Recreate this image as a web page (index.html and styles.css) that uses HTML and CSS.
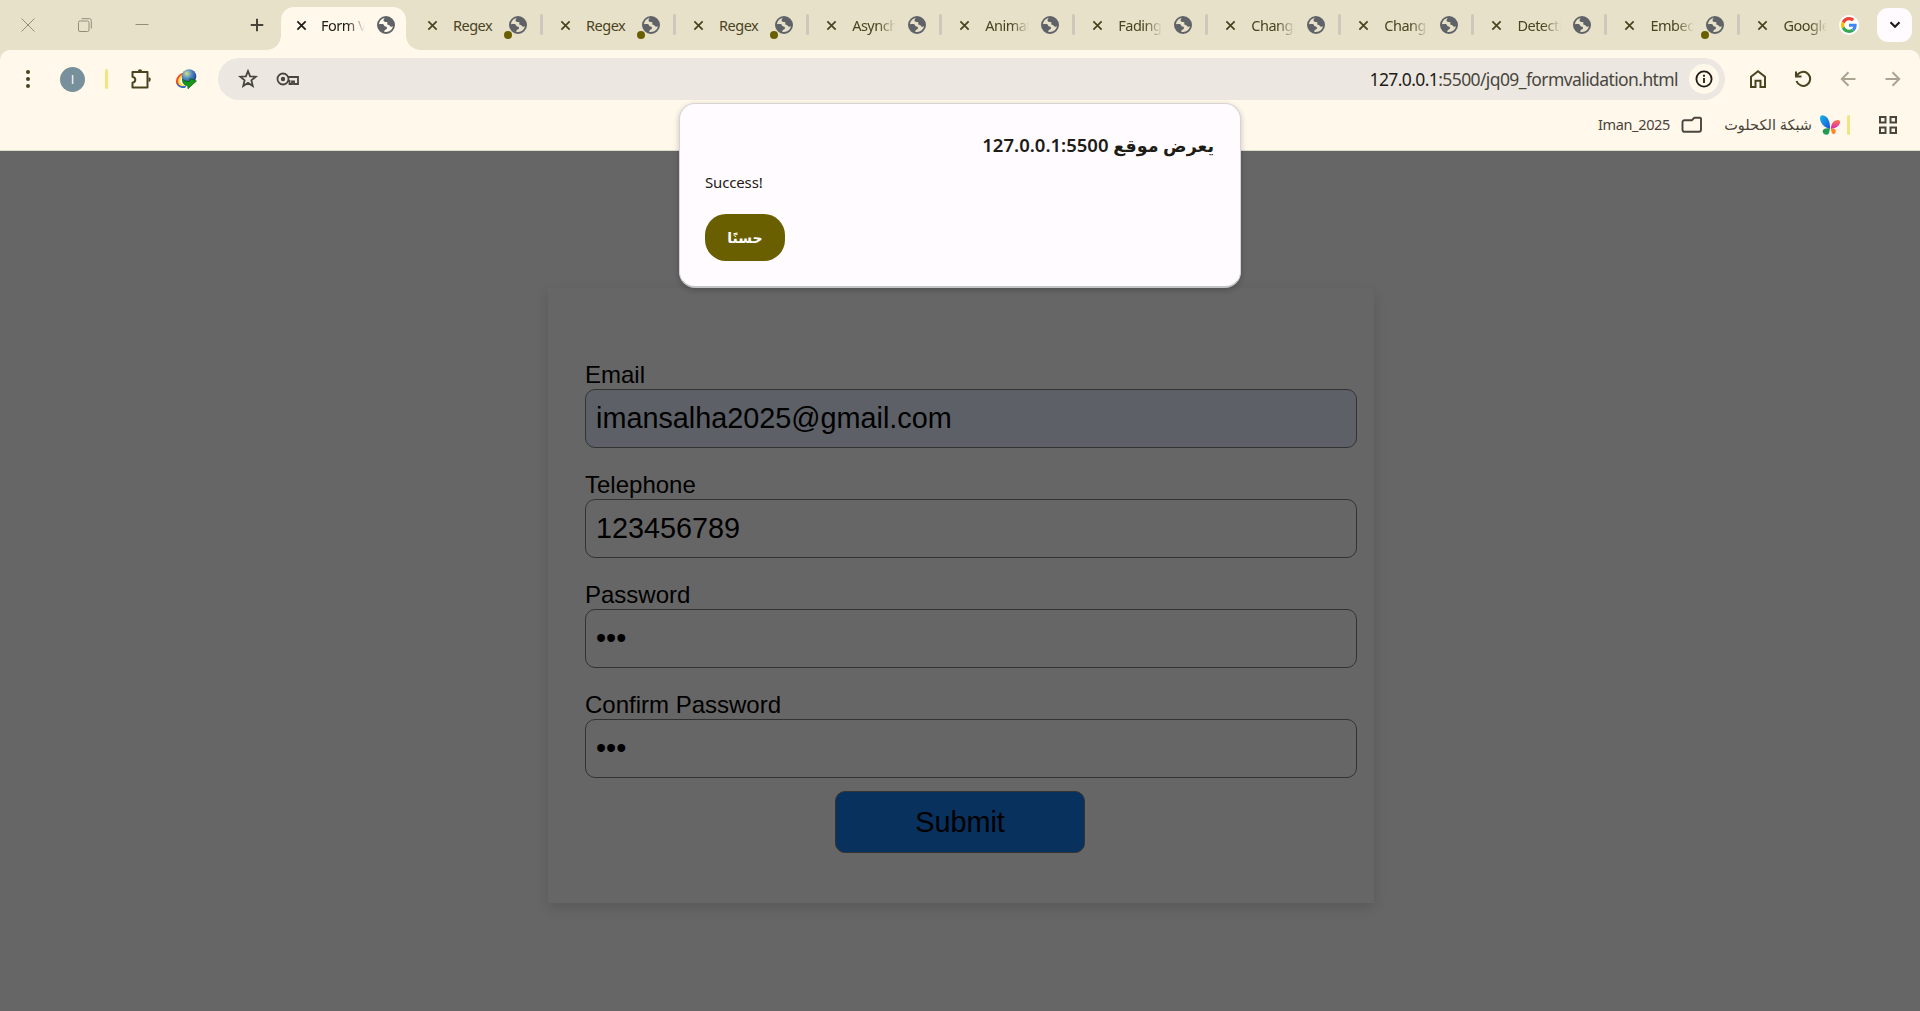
FILE: index.html
```html
<!DOCTYPE html>
<html lang="ar">
<head>
<meta charset="utf-8">
<title>Form Validation</title>
<link rel="stylesheet" href="styles.css">
</head>
<body>
<svg class="defs" aria-hidden="true">
  <symbol id="x" viewBox="0 0 12 12"><path d="M1.500 1.500l9 9M10.500 1.500l-9 9" fill="none" stroke="currentColor" stroke-width="1.9"/></symbol>
  <symbol id="globe" viewBox="0 0 18 18"><path fill="currentColor" fill-rule="evenodd" d="M9 0a9 9 0 1 0 0 18A9 9 0 0 0 9 0zM2 8.300C2.300 5 4.700 2.500 7.800 2.100 6.800 3 6.300 4 6.700 5c.4.900 1.500.9 2.600.9 1.200.1 1.400.8 1 1.600-.4.700-.1 1.100.7 1.200 1.300.2 1.500.8 2.200 1.500.8.800 1.900.6 2.700.1C15.400 13.500 12.600 16 9 16c-.7 0-1.200-.1-1.800-.2.200-1.200.6-2.100 1.700-2.400 1.200-.3 1.300-1.300.9-2.100-.4-.7-1.400-.7-2.100-1-.7-.4-.5-1.200-1.100-1.700C5.600 7.800 3.500 8.100 2 8.300z"/></symbol>
</svg>

<header class="tabstrip">
  <div class="window-controls">
    <svg width="14" height="14" viewBox="0 0 14 14"><path d="M.5.5l13 13M13.500.5l-13 13"/></svg>
    <svg width="14" height="14" viewBox="0 0 14 14"><rect x=".5" y="3" width="10.500" height="10.500" rx="1.500"/><path d="M3.500.7h8a1.800 1.800 0 0 1 1.800 1.800v8"/></svg>
    <svg width="14" height="14" viewBox="0 0 14 14"><path d="M.5 6.500h13"/></svg>
  </div>
  <svg class="new-tab" width="14" height="14" viewBox="0 0 14 14"><path d="M7 .7v12.600M.7 7h12.600"/></svg>
  <div class="tab active"><svg class="close"><use href="#x"/></svg><span>Form V</span><i class="favicon"><svg><use href="#globe"/></svg></i></div>
  <div class="tabs">
    <div class="tab marked"><svg class="close"><use href="#x"/></svg><span class="whole">Regex</span><i class="favicon"><svg><use href="#globe"/></svg></i></div>
    <div class="tab marked"><svg class="close"><use href="#x"/></svg><span class="whole">Regex</span><i class="favicon"><svg><use href="#globe"/></svg></i></div>
    <div class="tab marked"><svg class="close"><use href="#x"/></svg><span class="whole">Regex</span><i class="favicon"><svg><use href="#globe"/></svg></i></div>
    <div class="tab"><svg class="close"><use href="#x"/></svg><span>Asynch</span><i class="favicon"><svg><use href="#globe"/></svg></i></div>
    <div class="tab"><svg class="close"><use href="#x"/></svg><span>Animat</span><i class="favicon"><svg><use href="#globe"/></svg></i></div>
    <div class="tab"><svg class="close"><use href="#x"/></svg><span>Fading</span><i class="favicon"><svg><use href="#globe"/></svg></i></div>
    <div class="tab"><svg class="close"><use href="#x"/></svg><span>Changi</span><i class="favicon"><svg><use href="#globe"/></svg></i></div>
    <div class="tab"><svg class="close"><use href="#x"/></svg><span>Changi</span><i class="favicon"><svg><use href="#globe"/></svg></i></div>
    <div class="tab"><svg class="close"><use href="#x"/></svg><span>Detecti</span><i class="favicon"><svg><use href="#globe"/></svg></i></div>
    <div class="tab marked"><svg class="close"><use href="#x"/></svg><span>Embed</span><i class="favicon"><svg><use href="#globe"/></svg></i></div>
    <div class="tab last"><svg class="close"><use href="#x"/></svg><span>Google</span><i class="favicon google"><svg viewBox="0 0 48 48"><path fill="#ea4335" d="M24 9.500c3.540 0 6.710 1.220 9.210 3.600l6.850-6.850C35.900 2.380 30.470 0 24 0 14.620 0 6.510 5.380 2.560 13.220l7.980 6.190C12.430 13.720 17.740 9.500 24 9.500z"/><path fill="#4285f4" d="M46.980 24.550c0-1.570-.15-3.090-.38-4.550H24v9.020h12.940c-.58 2.960-2.260 5.480-4.780 7.180l7.730 6c4.510-4.180 7.090-10.360 7.090-17.650z"/><path fill="#fbbc05" d="M10.530 28.590A14.500 14.500 0 0 1 9.770 24c0-1.600.27-3.140.76-4.590l-7.980-6.190A23.900 23.900 0 0 0 0 24c0 3.880.92 7.540 2.560 10.780l7.970-6.190z"/><path fill="#34a853" d="M24 48c6.480 0 11.930-2.130 15.890-5.810l-7.730-6c-2.150 1.450-4.920 2.300-8.160 2.300-6.260 0-11.570-4.220-13.470-9.910l-7.980 6.190C6.510 42.620 14.620 48 24 48z"/></svg></i></div>
  </div>
  <button class="tab-search"><svg width="12" height="8" viewBox="0 0 12 8"><path d="M1.500 1.300L6 5.800l4.500-4.500"/></svg></button>
</header>

<nav class="chrome">
  <div class="toolbar">
    <svg class="icon" width="6" height="20" viewBox="0 0 6 20"><g fill="#49441f"><circle cx="3" cy="3" r="2"/><circle cx="3" cy="10" r="2"/><circle cx="3" cy="17" r="2"/></g></svg>
    <b class="avatar">I</b>
    <i class="bar"></i>
    <svg class="icon line" width="22" height="22" viewBox="0 0 22 22"><path d="M2.500 4h15v15.500h-15v-4.700c3.700-.8 3.700-5.200 0-6z" stroke-linejoin="round"/><path d="M7.800 3.500a2.200 2.200 0 0 1 4.400 0zM18.500 9.300a2.300 2.300 0 0 1 0 4.600z" fill="#49441f" stroke="none"/></svg>
    <svg class="icon" width="22" height="20" viewBox="0 0 22 20"><defs><radialGradient id="ball" cx=".35" cy=".3" r=".8"><stop offset="0" stop-color="#d5e27a"/><stop offset=".4" stop-color="#5590c8"/><stop offset="1" stop-color="#122b83"/></radialGradient></defs><path d="M9 3.500C4 4.500 .800 8.500 1 13c.3 4 4 5.500 8 5.500z" fill="#ee4f2b"/><path d="M9 5C5.500 6 2.800 9 3.200 13c.5 3.500 3 4.500 6 4.500z" fill="#ffe04a"/><path d="M9 7c-2.500 1-4 3.500-3.600 6 .5 2 2 3 4 3z" fill="#fff"/><path d="M1.300 13c2 4 6 5 10 3.500l-1 2.200c-4 1-8-.7-9-5.700z" fill="#2b6cc9"/><circle cx="14" cy="7.500" r="7.300" fill="url(#ball)"/><path d="M7.500 10c2 2.500 4.500 2.800 7 2.300l.5-2.800 6.500 2.500-8.500 7.800-.3-3C9 16.500 7 13.500 7.500 10z" fill="#159818" stroke="#064f0a" stroke-width=".6"/></svg>
    <div class="omnibox">
      <svg width="20" height="20" viewBox="0 0 20 20"><path d="M10 2l2.100 5.300 5.700.4-4.400 3.700 1.400 5.600-4.800-3.100L5.200 17l1.400-5.600L2.200 7.700l5.700-.4z"/></svg>
      <svg class="key" width="24" height="14" viewBox="0 0 24 14"><circle cx="7" cy="7" r="5.500"/><circle cx="7" cy="7" r="2.200" fill="#49463e" stroke="none"/><path d="M12 5h10v7h-4V9.500h-2V12h-2.500V9H12"/></svg>
      <p class="url"><b>127.0.0.1</b>:5500/jq09_formvalidation.html</p>
      <i class="info"><svg width="18" height="18" viewBox="0 0 18 18"><circle cx="9" cy="9" r="7.600"/><path d="M9 8v5M9 4.800v1.900"/></svg></i>
    </div>
    <svg class="icon line" width="18" height="20" viewBox="0 0 18 20"><path d="M2 7.800L9 2.300l7 5.500V18h-4.500v-6.200h-5V18H2z"/></svg>
    <svg class="icon line" width="18" height="18" viewBox="0 0 18 18"><path d="M3.200 5.200A7 7 0 1 1 2.500 11M2 1.500v5h5.500"/></svg>
    <svg class="icon line off" width="16" height="16" viewBox="0 0 16 16"><path d="M15.500 8H2M8.500 1.300L1.800 8l6.700 6.700"/></svg>
    <svg class="icon line off" width="16" height="16" viewBox="0 0 16 16"><path d="M.5 8H14M7.500 1.300L14.200 8l-6.700 6.700"/></svg>
  </div>
  <div class="bookmarks">
    <span class="folder-name">Iman_2025</span>
    <svg class="folder" width="22" height="18" viewBox="0 0 22 18"><path d="M20 2.500v11.300a2 2 0 0 1-2 2H3.500a2 2 0 0 1-2-2V6.200a2 2 0 0 1 2-2h7.300l2.600-2.500h5a1.500 1.500 0 0 1 1.600.8z"/></svg>
    <span class="site-name" dir="rtl">شبكة الكحلوت</span>
    <svg class="butterfly" width="20" height="20" viewBox="0 0 20 20"><defs><linearGradient id="wing" x1="0" y1="0" x2="1" y2="1"><stop offset="0" stop-color="#12b8e8"/><stop offset="1" stop-color="#1c52d8"/></linearGradient><linearGradient id="wing2" x1="0" y1="0" x2="0" y2="1"><stop offset="0" stop-color="#ff7a45"/><stop offset="1" stop-color="#d91fc0"/></linearGradient></defs><path d="M10 14C4 12.500 0 8 0 3c0-2 1.500-3 3.500-2.500C8 1.500 10.500 7 10 14z" fill="url(#wing)"/><path d="M10 13.500c-4-1-7.500.5-7.300 3C3 20 8 21 9 18z" fill="#219b53"/><path d="M11 14C10.500 8.500 14.500 4.500 18.500 5c3.500 1 1 8-7.500 9z" fill="url(#wing2)"/><path d="M11 14c3.500-1.500 5.500 1 4.500 3.500-2 3.500-4.500.5-4.500-3.500z" fill="#ff8528"/></svg>
    <i class="bar"></i>
    <svg class="apps" width="18" height="18" viewBox="0 0 18 18"><path d="M1 1h5.500v5.500H1zM11.500 1H17v5.500h-5.500zM1 11.500h5.500V17H1zM11.500 11.500H17V17h-5.500z"/></svg>
  </div>
</nav>

<main class="page">
  <form class="card">
    <label>Email<input class="filled" type="text" value="imansalha2025@gmail.com"></label>
    <label>Telephone<input type="text" value="123456789"></label>
    <label>Password<input type="password" value="123"></label>
    <label>Confirm Password<input type="password" value="123"></label>
    <button type="button" class="submit">Submit</button>
  </form>
</main>

<section class="dialog" role="alertdialog">
  <h1 dir="rtl"><span>يعرض موقع</span> <bdi>127.0.0.1:5500</bdi></h1>
  <p>Success!</p>
  <button type="button">حسنًا</button>
</section>
</body>
</html>
```
FILE: styles.css
```css
* { box-sizing: border-box; }
body { margin: 0; height: 1011px; display: flex; flex-direction: column; overflow: hidden; background: #e8e1c9; font-family: "Noto Sans", "DejaVu Sans", sans-serif; color: #49443a; }
svg { flex: none; display: block; }
i, b { font-style: normal; font-weight: 400; }
.defs { position: absolute; width: 0; height: 0; }

.tabstrip { height: 50px; flex: none; display: flex; align-items: center; }
.window-controls { width: 250px; padding: 0 0 1px 21px; display: flex; gap: 43px; }
.window-controls svg { fill: none; stroke: #928c7c; stroke-width: 1; }
.new-tab { stroke: #49443a; stroke-width: 2; margin-right: 17px; }
.tab { height: 50px; width: 133.06px; flex: none; display: flex; align-items: center; padding-left: 18px; color: #49441f; position: relative; }
.tab .close { width: 11px; height: 11px; }
.tab span { flex: none; width: 52px; margin: 0 4px 0 15px; font-size: 14.500px; line-height: 20px; letter-spacing: -.5px; white-space: nowrap; -webkit-mask-image: linear-gradient(90deg, #000 26px, transparent 44px); mask-image: linear-gradient(90deg, #000 26px, transparent 44px); }
.tab span.whole { -webkit-mask-image: none; mask-image: none; }
.favicon { width: 18px; height: 18px; color: #5f6368; position: relative; flex: none; }
.favicon svg { width: 18px; height: 18px; }
.tab.marked .favicon::after { content: ""; position: absolute; left: -5px; bottom: -5px; width: 8px; height: 8px; border-radius: 50%; background: #6a5f00; }
.tab::after { content: ""; position: absolute; right: -1px; top: 14px; width: 3px; height: 21px; border-radius: 2px; background: #cfc6bd; }
.tab.active::after, .tab.last::after { display: none; }
.tabs { display: flex; width: 1467px; margin-left: 3px; }
.tab.active { width: 125px; height: 43px; margin-top: 7px; padding: 0 0 7px 15px; border-radius: 13px 13px 0 0; background: #fff8eb; color: #1d1c16; }
.tab.active span { margin-left: 14px; }
.tab.active::before { content: ""; position: absolute; bottom: 0; left: -14px; right: -14px; height: 14px; background: radial-gradient(circle at 0 0, transparent 13.500px, #fff8eb 14px) left / 14px 14px no-repeat, radial-gradient(circle at 14px 0, transparent 13.500px, #fff8eb 14px) right / 14px 14px no-repeat; }
.google { width: 20px; height: 20px; border-radius: 50%; background: #fff; display: grid; place-items: center; }
.google svg { width: 16px; height: 16px; }
.tab-search { width: 35px; height: 34px; margin-left: 1px; padding: 0; border: 0; border-radius: 11px; background: #fffbff; display: grid; place-items: center; }
.tab-search svg { fill: none; stroke: #1d1c16; stroke-width: 2.200; }

.chrome { height: 101px; flex: none; background: #fff8eb; border-radius: 10px 10px 0 0; border-bottom: 1px solid #dddbc9; padding-top: 8px; }
.toolbar { height: 42px; display: grid; grid-template-columns: 45px 45px 23px 45px 45px 1527px 45px 45px 45px 45px; padding-left: 5px; align-items: center; justify-items: center; }
.line { fill: none; stroke: #49441f; stroke-width: 2; }
.line.off { stroke: #aaa593; }
.avatar { width: 25px; height: 25px; border-radius: 50%; background: #78909c; color: #fff; font: 13px/25px "Open Sans", sans-serif; text-align: center; }
.bar { width: 3px; height: 20px; border-radius: 2px; background: #f3e382; }
.omnibox { width: 1507px; height: 42px; display: flex; align-items: center; padding: 0 6px 0 20px; border-radius: 21px; background: #ece8e1; }
.omnibox svg { fill: none; stroke: #49463e; stroke-width: 1.800; }
.omnibox .key { margin-left: 18px; }
.url { flex: 1; margin: 0 11px 0 0; text-align: right; font-size: 17.500px; letter-spacing: -.6px; color: #49463e; white-space: nowrap; }
.url b { color: #1d1c16; }
.info { width: 30px; height: 30px; border-radius: 50%; background: #fff8eb; display: grid; place-items: center; }
.omnibox .info svg { stroke: #1d1c16; }
.bookmarks { height: 50px; display: flex; align-items: center; justify-content: flex-end; padding-right: 23px; font-size: 14.500px; letter-spacing: -.35px; }
.bookmarks span { margin-top: -2px; }
.folder { margin: 0 22px 0 11px; fill: none; stroke: #49463e; stroke-width: 1.900; }
.site-name { font-size: 14.500px; letter-spacing: 0; width: 87px; white-space: nowrap; }
.butterfly { margin: 0 7px 0 8px; }
.apps { margin-left: 29px; fill: none; stroke: #49463e; stroke-width: 2; }

.page { flex: 1; background: #666; display: flex; justify-content: center; align-items: flex-start; padding-top: 137px; font-family: "Liberation Sans", Arial, sans-serif; color: #000; }
.card { width: 826px; height: 615px; margin-left: 2px; padding: 72px 17px 0 37px; background: #666; box-shadow: 0 5px 12px rgba(0,0,0,.13); display: flex; flex-direction: column; }
label { height: 110px; font-size: 24px; line-height: 29px; }
input { display: block; width: 772px; height: 59px; padding: 0 10px; border: 1px solid #333; border-radius: 10px; background: #666; color: #000; font: 28.800px "Liberation Sans", Arial, sans-serif; outline: 0; }
.filled { background: #5d6066; }
.submit { width: 250px; height: 62px; margin: -9px 0 0 250px; border: 1px solid #333; border-radius: 10px; background: #08315d; color: #000; font: 28.800px "Liberation Sans", Arial, sans-serif; }

.dialog { position: absolute; left: 679px; top: 103px; width: 562px; height: 185px; padding: 26px 26px 0 25px; border: 1px solid #d5d4d3; border-bottom: 2px solid #c4c4c4; border-radius: 16px; background: #fffbff; box-shadow: 0 2px 6px rgba(0,0,0,.22); color: #1d1c16; display: flex; flex-direction: column; align-items: flex-start; }
.dialog h1 { width: 100%; height: 30px; margin: 0; font-size: 18.500px; line-height: 30px; font-weight: 600; letter-spacing: -.4px; white-space: nowrap; }
.dialog h1 span { font-size: 17.500px; letter-spacing: 0; }
.dialog p { margin: 12px 0 0; font-size: 15px; line-height: 20px; letter-spacing: -.15px; }
.dialog button { width: 80px; height: 47px; margin-top: 22px; border: 0; border-radius: 21px; background: #695f00; color: #fff; font: 600 14px "Noto Sans", "DejaVu Sans", sans-serif; }
```
